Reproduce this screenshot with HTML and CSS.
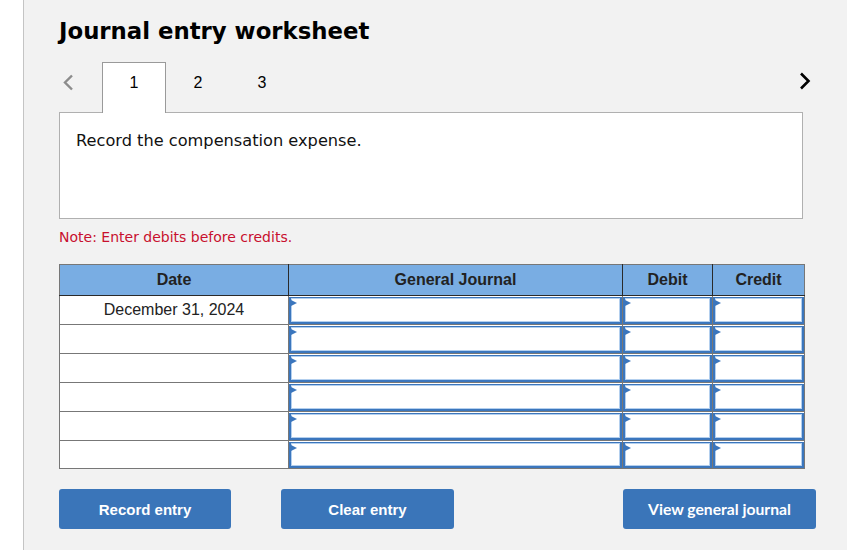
FILE: index.html
```html
<!DOCTYPE html>
<html lang="en">
<head>
<meta charset="utf-8">
<title>Journal entry worksheet</title>
<link rel="stylesheet" href="styles.css">
</head>
<body>
<div class="panel">
  <h1 class="title">Journal entry worksheet</h1>
  <div class="tabs">
    <span class="nav prev">
      <svg width="12" height="17" viewBox="0 0 12 17"><path d="M10 1.5 L3 8.5 L10 15.5" fill="none" stroke="#8c8c8c" stroke-width="2.4"/></svg>
    </span>
    <span class="tab active">1</span>
    <span class="tab">2</span>
    <span class="tab">3</span>
    <span class="nav next">
      <svg width="12" height="18" viewBox="0 0 12 18"><path d="M2 1.5 L9.5 9 L2 16.5" fill="none" stroke="#000" stroke-width="2.6"/></svg>
    </span>
  </div>
  <div class="question">Record the compensation expense.</div>
  <p class="note">Note: Enter debits before credits.</p>
  <table class="journal">
    <colgroup>
      <col class="c-date"><col class="c-gj"><col class="c-debit"><col class="c-credit">
    </colgroup>
    <thead>
      <tr><th>Date</th><th>General Journal</th><th>Debit</th><th>Credit</th></tr>
    </thead>
    <tbody>
      <tr><td class="date">December 31, 2024</td><td class="in"><div class="field"></div></td><td class="in"><div class="field"></div></td><td class="in"><div class="field"></div></td></tr>
      <tr><td class="date"></td><td class="in"><div class="field"></div></td><td class="in"><div class="field"></div></td><td class="in"><div class="field"></div></td></tr>
      <tr><td class="date"></td><td class="in"><div class="field"></div></td><td class="in"><div class="field"></div></td><td class="in"><div class="field"></div></td></tr>
      <tr><td class="date"></td><td class="in"><div class="field"></div></td><td class="in"><div class="field"></div></td><td class="in"><div class="field"></div></td></tr>
      <tr><td class="date"></td><td class="in"><div class="field"></div></td><td class="in"><div class="field"></div></td><td class="in"><div class="field"></div></td></tr>
      <tr class="last"><td class="date"></td><td class="in"><div class="field"></div></td><td class="in"><div class="field"></div></td><td class="in"><div class="field"></div></td></tr>
    </tbody>
  </table>
  <div class="actions">
    <button class="btn">Record entry</button>
    <button class="btn clear">Clear entry</button>
    <button class="btn view">View general journal</button>
  </div>
</div>
</body>
</html>
```
FILE: styles.css
```css
html, body {
  margin: 0;
  padding: 0;
  background: #ffffff;
}
.panel {
  margin-left: 23px;
  border-left: 1px solid #c4c4c4;
  background: #f2f2f2;
  min-height: 550px;
  box-sizing: border-box;
  padding: 18px 0 0 35px;
}
.title {
  margin: 0;
  font-family: "DejaVu Sans", Verdana, sans-serif;
  font-weight: bold;
  font-size: 22.8px;
  line-height: 26px;
  color: #000;
}
.tabs {
  margin-top: 18px;
  display: flex;
  align-items: stretch;
  height: 51px;
  width: 757px;
  position: relative;
  z-index: 2;
}
.nav {
  display: flex;
  align-items: flex-start;
  padding-top: 12px;
  box-sizing: border-box;
}
.prev {
  width: 43px;
  padding-left: 3px;
}
.next {
  margin-left: auto;
  padding-top: 10px;
  padding-right: 5px;
}
.tab {
  width: 64px;
  box-sizing: border-box;
  text-align: center;
  font-family: "Liberation Sans", Arial, sans-serif;
  font-size: 16px;
  line-height: 18px;
  padding-top: 11px;
  color: #000;
  border: 1px solid transparent;
  border-bottom: none;
}
.tab.active {
  background: #fff;
  border-color: #9a9a9a;
}
.question {
  position: relative;
  z-index: 1;
  margin-top: -1px;
  width: 744px;
  height: 107px;
  box-sizing: border-box;
  background: #fff;
  border: 1px solid #b0b0b0;
  padding: 18px 16px 0 16px;
  font-family: "DejaVu Sans", Verdana, sans-serif;
  font-size: 16.2px;
  line-height: 20px;
  color: #111;
}
.note {
  margin: 10px 0 0 0;
  font-family: "DejaVu Sans", Verdana, sans-serif;
  font-size: 14px;
  line-height: 16px;
  color: #c8102e;
}
.journal {
  margin-top: 19px;
  border-collapse: collapse;
  table-layout: fixed;
  width: 745px;
  font-family: "Liberation Sans", Arial, sans-serif;
  font-size: 16px;
  border: 1px solid #777;
}
.c-date { width: 229px; }
.c-gj { width: 334px; }
.c-debit { width: 90px; }
.c-credit { width: 92px; }
.journal th {
  background: #79ade3;
  color: #222;
  font-weight: bold;
  height: 31px;
  padding: 0;
  border: 1px solid #2a2a2a;
  border-top-color: #777;
  box-sizing: border-box;
}
.journal th:first-child { border-left-color: #777; }
.journal th:last-child { border-right-color: #777; }
.journal td {
  border: 1px solid #777;
  height: 29px;
  padding: 0;
  box-sizing: border-box;
  background: #fff;
}
.journal tr.last td {
  height: 28px;
}
.journal td.date {
  text-align: center;
  color: #222;
}
.field {
  position: relative;
  height: 27px;
  box-sizing: border-box;
  border: 2px solid #3b76bd;
  border-top-width: 1px;
  box-shadow: inset 0 0 0 1px #b3cfee;
  background: #fff;
}
.journal tr.last .field {
  height: 26px;
}
.field::before {
  content: "";
  position: absolute;
  left: -2px;
  top: 1px;
  width: 0;
  height: 0;
  border-left: 8px solid #3b76bd;
  border-top: 4.5px solid transparent;
  border-bottom: 4.5px solid transparent;
}
.actions {
  margin-top: 20px;
  width: 757px;
  display: flex;
}
.btn {
  height: 40px;
  width: 172px;
  border: none;
  border-radius: 3px;
  background: #3a75b9;
  color: #fff;
  font-family: "Liberation Sans", Arial, sans-serif;
  font-weight: bold;
  font-size: 15px;
  padding: 0;
}
.btn.clear {
  margin-left: 50px;
  width: 173px;
}
.btn.view {
  margin-left: auto;
  width: 193px;
  font-family: Lato, "Liberation Sans", sans-serif;
  font-size: 15.7px;
}
```
